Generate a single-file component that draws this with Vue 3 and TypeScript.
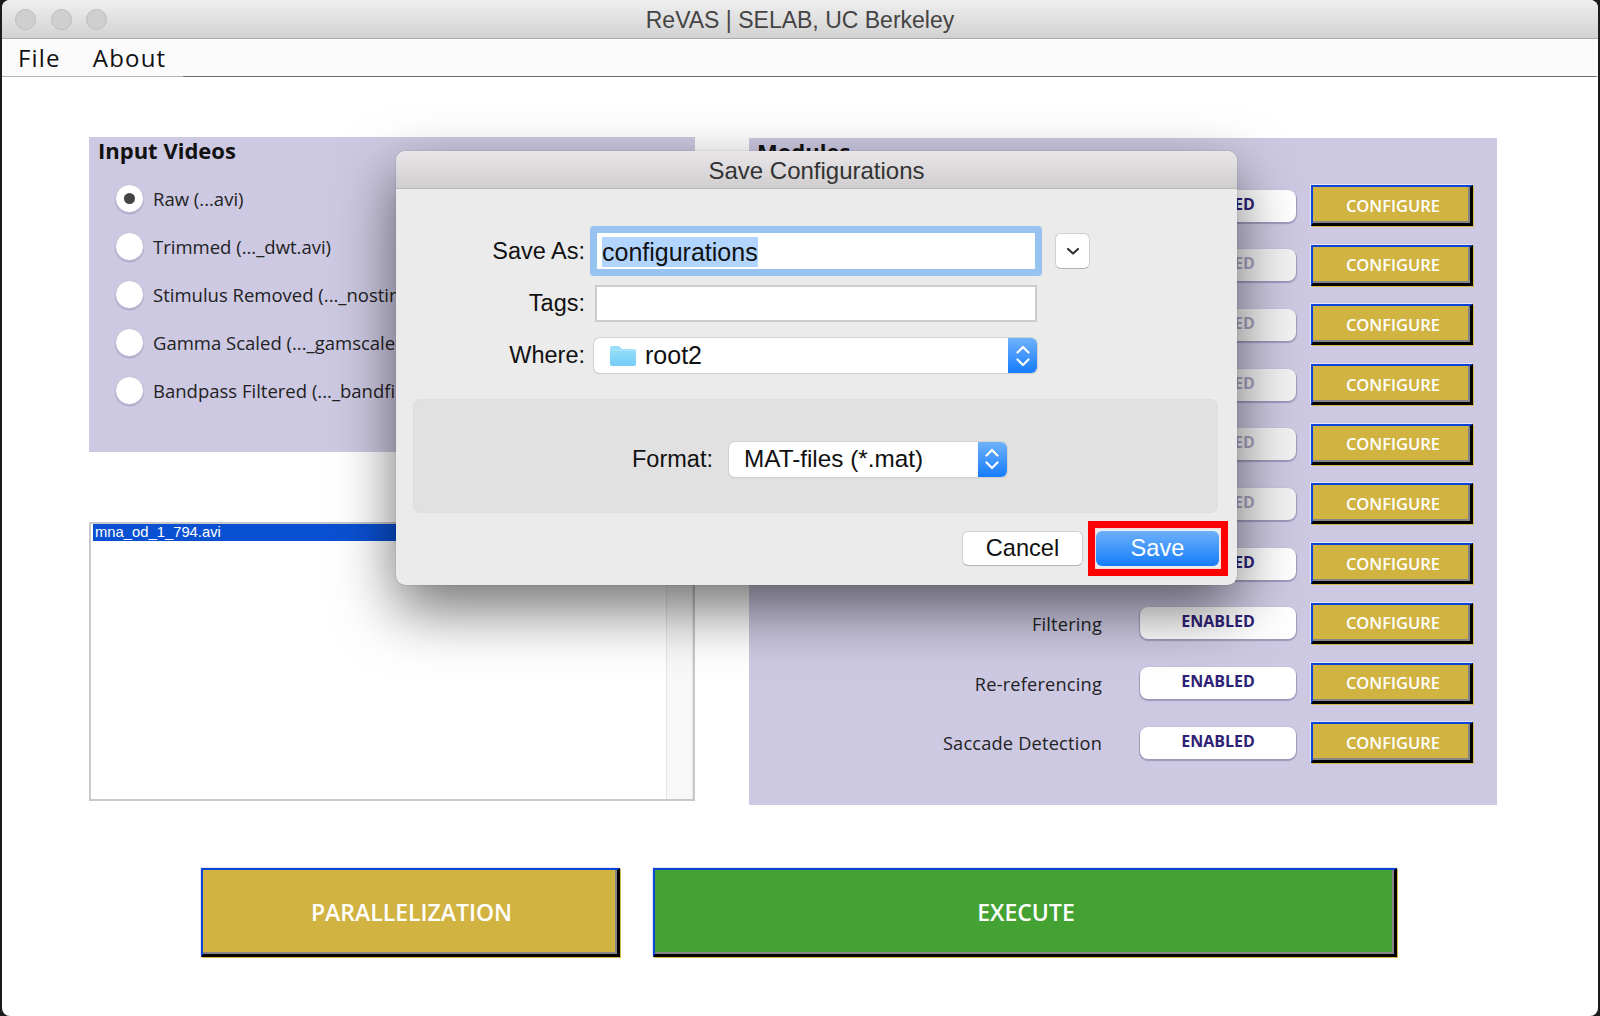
<template>
  <div class="window">
    <header class="titlebar">
      <div class="lights">
        <span v-for="n in 3" :key="n" class="light"></span>
      </div>
      <span class="title">ReVAS | SELAB, UC Berkeley</span>
    </header>
    <nav class="menubar">
      <span class="menu-item">File</span>
      <span class="menu-item">About</span>
      <span class="menu-rule"></span>
    </nav>

    <main class="content">
      <div class="columns">
        <div class="left">
          <section class="inputs">
            <h2 class="heading">Input Videos</h2>
            <label v-for="(opt, i) in videoTypes" :key="opt" class="radio-row">
              <span :class="['radio', { checked: i === 0 }]"></span>
              <span class="radio-text">{{ opt }}</span>
            </label>
          </section>
          <div class="listbox">
            <div class="list-row">mna_od_1_794.avi</div>
            <div class="list-track"></div>
          </div>
        </div>

        <section class="modules">
          <h2 class="heading">Modules</h2>
          <div class="module-grid">
            <div v-for="mod in modules" :key="mod.id" class="module-row">
              <span class="module-label">{{ mod.label }}</span>
              <span :class="['toggle', { muted: mod.muted }]">ENABLED</span>
              <button class="bevel configure">CONFIGURE</button>
            </div>
          </div>
        </section>
      </div>

      <div class="actions">
        <button class="bevel parallel">PARALLELIZATION</button>
        <button class="bevel execute">EXECUTE</button>
      </div>
    </main>

    <div class="dialog">
      <div class="dialog-title">Save Configurations</div>
      <div class="form">
        <span class="form-label">Save As:</span>
        <div class="field focused"><span class="selected">configurations</span></div>
        <button class="expand">
          <svg width="14" height="9" viewBox="0 0 14 9">
            <path d="M2 2l5 4.5L12 2" fill="none" stroke="#333" stroke-width="2.2" stroke-linecap="round" stroke-linejoin="round" />
          </svg>
        </button>

        <span class="form-label">Tags:</span>
        <div class="field tags"></div>
        <span></span>

        <span class="form-label">Where:</span>
        <div class="select where">
          <svg class="folder" width="28" height="23" viewBox="0 0 28 23">
            <defs>
              <linearGradient id="folderFill" x1="0" y1="0" x2="0" y2="1">
                <stop offset="0" stop-color="#9be0fb" />
                <stop offset="1" stop-color="#74cdf8" />
              </linearGradient>
            </defs>
            <path d="M1 4a2 2 0 0 1 2-2h7l3 3h12a2 2 0 0 1 2 2v13a2 2 0 0 1-2 2H3a2 2 0 0 1-2-2z" fill="url(#folderFill)" />
            <path d="M1 6h26" stroke="#b5e9fd" stroke-width="1" />
          </svg>
          <span class="select-text">root2</span>
          <span class="stepper">
            <svg width="16" height="24" viewBox="0 0 16 24">
              <path d="M2.5 8.5L8 3l5.5 5.5M2.5 15.5L8 21l5.5-5.5" fill="none" stroke="#fff" stroke-width="2.2" stroke-linecap="round" stroke-linejoin="round" />
            </svg>
          </span>
        </div>
        <span></span>
      </div>

      <div class="format-panel">
        <span class="form-label">Format:</span>
        <div class="select format">
          <span class="select-text">MAT-files (*.mat)</span>
          <span class="stepper">
            <svg width="16" height="24" viewBox="0 0 16 24">
              <path d="M2.5 8.5L8 3l5.5 5.5M2.5 15.5L8 21l5.5-5.5" fill="none" stroke="#fff" stroke-width="2.2" stroke-linecap="round" stroke-linejoin="round" />
            </svg>
          </span>
        </div>
      </div>

      <div class="dialog-footer">
        <button class="mac-btn">Cancel</button>
        <div class="save-wrap">
          <button class="mac-btn primary">Save</button>
          <span class="marker"></span>
        </div>
      </div>
    </div>
  </div>
</template>

<script setup lang="ts">
interface ModuleRow {
  id: number
  label: string
  muted: boolean
}

const videoTypes: string[] = [
  'Raw (...avi)',
  'Trimmed (..._dwt.avi)',
  'Stimulus Removed (..._nostim.avi)',
  'Gamma Scaled (..._gamscaled.avi)',
  'Bandpass Filtered (..._bandfilt.avi)',
]

// first seven rows sit behind the dialog, only their right ends show
const modules: ModuleRow[] = [
  { id: 1, label: '', muted: false },
  { id: 2, label: '', muted: true },
  { id: 3, label: '', muted: true },
  { id: 4, label: '', muted: true },
  { id: 5, label: '', muted: true },
  { id: 6, label: '', muted: true },
  { id: 7, label: '', muted: false },
  { id: 8, label: 'Filtering', muted: false },
  { id: 9, label: 'Re-referencing', muted: false },
  { id: 10, label: 'Saccade Detection', muted: false },
]
</script>

<style>
html,
body {
  margin: 0;
  background: #1c1c1c;
  overflow: hidden;
}
</style>

<style scoped>
.window {
  position: relative;
  height: 1016px;
  margin: 0 2px;
  background: #fff;
  border-radius: 8px;
  overflow: hidden;
  font-family: "Open Sans", "DejaVu Sans", sans-serif;
  color: #1a1a1a;
}
.titlebar {
  position: relative;
  height: 38px;
  box-sizing: content-box;
  display: flex;
  align-items: center;
  justify-content: center;
  background: linear-gradient(#efefef, #d2d2d2);
  border-bottom: 1px solid #a8a8a8;
}
.lights {
  position: absolute;
  left: 13px;
  top: 9px;
  display: flex;
  gap: 14.5px;
}
.light {
  width: 21px;
  height: 21px;
  box-sizing: border-box;
  border-radius: 50%;
  background: #cfcfcf;
  border: 1px solid #bcbcbc;
}
.title {
  font-family: "Liberation Sans", sans-serif;
  font-size: 23px;
  padding-top: 3px;
  color: #444;
}
.menubar {
  height: 37px;
  display: flex;
  align-items: center;
  background: #fbfbfb;
  border-bottom: 1px solid #b5b5b5;
  padding-left: 16px;
  position: relative;
}
.menu-item {
  font-size: 24px;
  color: #111;
  margin-right: 32px;
  letter-spacing: 1.2px;
}
.menu-rule {
  position: absolute;
  left: 181px;
  right: 2px;
  bottom: -1px;
  height: 1px;
  background: #6f6f6f;
}
.content {
  padding: 60px 0 0 87px;
}
.columns {
  display: flex;
  gap: 54px;
  align-items: flex-start;
}
.left {
  width: 606px;
  display: flex;
  flex-direction: column;
  gap: 70px;
}
.inputs {
  height: 315px;
  background: #cdc9e2;
  box-sizing: border-box;
  padding: 0 0 0 26px;
}
.heading {
  margin: 0 0 0 -17px;
  font-size: 22px;
  font-weight: 700;
  line-height: 26px;
  color: #111;
}
.radio-row {
  display: flex;
  align-items: center;
  gap: 9px;
  height: 48px;
  white-space: nowrap;
}
.inputs .heading {
  margin-bottom: 11px;
}
.radio {
  width: 29px;
  height: 29px;
  box-sizing: border-box;
  border-radius: 50%;
  background: #fff;
  border: 1px solid #c2bed6;
  box-shadow: 0 1px 1px rgba(70, 60, 110, 0.3);
  display: flex;
  align-items: center;
  justify-content: center;
}
.radio.checked::after {
  content: "";
  width: 11px;
  height: 11px;
  border-radius: 50%;
  background: #444;
}
.radio-text {
  font-size: 18.5px;
  color: #222;
}
.listbox {
  position: relative;
  height: 279px;
  box-sizing: border-box;
  border: 2px solid #c9c9c9;
  background: #fff;
}
.list-row {
  height: 17px;
  background: #0a50d2;
  color: #fff;
  font-family: "Liberation Sans", sans-serif;
  font-size: 14.8px;
  line-height: 16px;
  padding-left: 2px;
  margin-left: 2px;
}
.list-track {
  position: absolute;
  top: 0;
  right: 0;
  bottom: 0;
  width: 25px;
  background: #f8f8f8;
  border-left: 1px solid #e6e6e6;
  border-right: 1px solid #e6e6e6;
}
.modules {
  width: 748px;
  height: 667px;
  margin-top: 1px;
  background: #cdc9e2;
  box-sizing: border-box;
  padding-left: 26px;
}
.modules .heading {
  margin-left: -18px;
  height: 47px;
}
.module-grid {
  display: flex;
  flex-direction: column;
  gap: 18.7px;
  padding-right: 24px;
}
.module-row {
  display: flex;
  align-items: center;
  justify-content: flex-end;
  height: 41px;
}
.module-label {
  font-size: 18.2px;
  letter-spacing: 0.2px;
  color: #222;
  margin-right: 38px;
  padding-top: 1px;
}
.toggle {
  width: 156px;
  height: 32px;
  box-sizing: border-box;
  background: #fff;
  border-radius: 8px;
  box-shadow: 0 1px 1px 1px rgba(90, 80, 130, 0.4);
  color: #2e2277;
  font-size: 16px;
  font-weight: 700;
  text-align: center;
  line-height: 28px;
  margin-right: 15px;
  flex: none;
}
.toggle.muted {
  color: #a8a5c2;
  background: #f2f2f2;
}
.bevel {
  box-sizing: border-box;
  border-style: solid;
  border-width: 2px 3px 3px 2px;
  border-color: #0a45d8 #000 #000 #0a45d8;
  box-shadow: inset -2px -2px 0 #858585, -1px -1px 0 #e7e5f5, 1px 1px 0 #d6b84a;
  color: #fff;
  font-family: "Open Sans", "DejaVu Sans", sans-serif;
  font-weight: 600;
  padding: 0 0 0 3px;
}
.configure {
  width: 162px;
  height: 41px;
  background: #d1b342;
  font-size: 16.5px;
  flex: none;
}
.actions {
  display: flex;
  gap: 33px;
  margin: 63px 0 0 112px;
}
.parallel {
  width: 419px;
  height: 89px;
  background: #d1b342;
  font-size: 23px;
}
.execute {
  width: 744px;
  height: 89px;
  background: #43a231;
  font-size: 23px;
}
.dialog {
  position: absolute;
  left: 394px;
  top: 151px;
  width: 841px;
  height: 434px;
  background: #ebebeb;
  border-radius: 9px;
  box-shadow: 0 24px 60px rgba(0, 0, 0, 0.56), 0 0 1px rgba(0, 0, 0, 0.5);
  font-family: "Liberation Sans", sans-serif;
  color: #111;
}
.dialog-title {
  height: 37px;
  line-height: 40px;
  text-align: center;
  font-size: 24px;
  color: #333;
  background: linear-gradient(#e9e7e9, #cfcdce);
  border-bottom: 1px solid #b9b9b9;
  border-radius: 9px 9px 0 0;
}
.form {
  display: grid;
  grid-template-columns: 189px 442px 35px;
  column-gap: 10px;
  row-gap: 16px;
  align-items: center;
  padding-top: 44px;
}
.form-label {
  font-size: 23.5px;
  text-align: right;
}
.field {
  box-sizing: border-box;
  background: #fff;
  height: 37px;
  font-size: 25px;
}
.focused {
  height: 36px;
  width: 438px;
  margin-left: 2px;
  border-radius: 1px;
  box-shadow: 0 0 0 7px #97c3f0;
  padding: 4px 0 0 5px;
}
.selected {
  display: inline-block;
  height: 30px;
  line-height: 30px;
  background: #b1d5fe;
}
.tags {
  border: 2px solid #cdcdcd;
}
.expand {
  width: 35px;
  height: 36px;
  margin-left: 8px;
  background: #fff;
  border: 1px solid #cfcfcf;
  border-bottom-color: #b5b5b5;
  border-radius: 6px;
  padding: 0;
  display: flex;
  align-items: center;
  justify-content: center;
}
.select {
  position: relative;
  height: 35px;
  box-sizing: border-box;
  display: flex;
  align-items: center;
  background: #fff;
  border-radius: 6px;
  box-shadow: 0 0 0 1px #d2d2d2, 0 1px 1px #a9a9a9;
  font-size: 25px;
}
.where {
  margin-left: -1px;
  padding-left: 15px;
}
.folder {
  margin-right: 8px;
}
.stepper {
  position: absolute;
  top: 0;
  right: 0;
  bottom: 0;
  width: 29px;
  display: flex;
  align-items: center;
  justify-content: center;
  background: linear-gradient(#6fb2fb, #157cfb);
  border-radius: 0 6px 6px 0;
}
.format-panel {
  height: 114px;
  margin: 26px 19px 0 17px;
  box-sizing: border-box;
  display: flex;
  align-items: center;
  justify-content: center;
  gap: 16px;
  padding: 6px 0 0 8px;
  background: #e1e1e1;
  border: 1px solid #dedede;
  border-radius: 7px;
}
.format {
  width: 278px;
  padding-left: 15px;
  font-size: 24.3px;
}
.dialog-footer {
  display: flex;
  justify-content: flex-end;
  gap: 13px;
  padding: 18px 18px 0 0;
}
.mac-btn {
  width: 121px;
  height: 35px;
  box-sizing: border-box;
  background: #fff;
  border: 1px solid #d0d0d0;
  border-bottom-color: #b3b3b3;
  border-radius: 6px;
  font-family: "Liberation Sans", sans-serif;
  font-size: 23.6px;
  color: #111;
  padding: 0;
}
.save-wrap {
  position: relative;
}
.primary {
  width: 123px;
  display: block;
  background: linear-gradient(#6db0fb, #167dfb);
  border: none;
  color: #fff;
}
.marker {
  position: absolute;
  left: -8px;
  right: -9px;
  top: -10px;
  bottom: -10px;
  border: 7px solid #fe0000;
  box-shadow: inset 0 0 0 1px #f3dcdc;
}
</style>
